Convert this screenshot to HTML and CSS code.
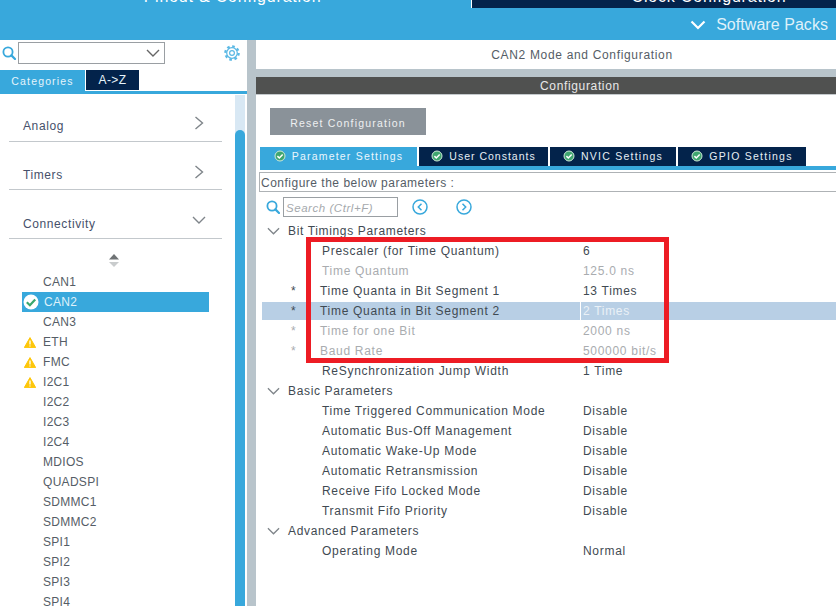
FILE: index.html
```html
<!DOCTYPE html>
<html lang="en">
<head>
<meta charset="utf-8">
<title>CAN2 Mode and Configuration</title>
<link rel="stylesheet" href="styles.css">
</head>
<body>
<svg class="defs" width="0" height="0" aria-hidden="true">
  <symbol id="i-search" viewBox="0 0 14 14"><circle cx="6" cy="6" r="4.6" fill="none" stroke="currentColor" stroke-width="1.8"/><path d="M9.4 9.4 13 13" stroke="currentColor" stroke-width="2.2" stroke-linecap="round"/></symbol>
  <symbol id="i-warn" viewBox="0 0 12 11"><path d="M6 .6 11.7 10.6H.3Z" fill="#fdc60a" stroke="#fdc60a" stroke-linejoin="round"/><path d="M6 3.6V7.4M6 8.4v1.1" stroke="#fff" stroke-width="1.3"/></symbol>
  <symbol id="i-tick" viewBox="0 0 12 12"><circle cx="6" cy="6" r="5" fill="#3fa66f" stroke="#cfe9da"/><path d="M3.4 6.1 5.3 8 8.7 4.4" fill="none" stroke="#fff" stroke-width="1.5"/></symbol>
  <symbol id="i-right" viewBox="0 0 10 14"><path d="M1.5 1 8.5 7 1.5 13" fill="none" stroke="#7f858a" stroke-width="1.4"/></symbol>
  <symbol id="i-down" viewBox="0 0 14 8"><path d="M1 1 7 7 13 1" fill="none" stroke="#7f858a" stroke-width="1.4"/></symbol>
</svg>
<div class="app">
  <header class="topbar">
    <div class="toptabs">
      <div class="toptab toptab-on">Pinout &amp; Configuration</div>
      <div class="toptab toptab-off">Clock Configuration</div>
    </div>
    <div class="packs">
      <svg class="packs-icon" viewBox="0 0 16 10"><path d="M1.5 1.5 8 8 14.500 1.500" fill="none" stroke="#fff" stroke-width="2.200"/></svg>
      <span>Software Packs</span>
    </div>
  </header>
  <div class="body">
    <aside class="side">
      <div class="side-search">
        <svg class="ico-search"><use href="#i-search"/></svg>
        <div class="combo">
          <svg class="combo-arrow" viewBox="0 0 14 8"><path d="M1 1 7 7 13 1" fill="none" stroke="#666" stroke-width="1.400"/></svg>
        </div>
        <svg class="gear" viewBox="0 0 16 16"><circle cx="8" cy="8" r="6.600" fill="none" stroke="#5ab8e4" stroke-width="2.400" stroke-dasharray="2.600 2.580"/><circle cx="8" cy="8" r="5.300" fill="#fff" stroke="#5ab8e4" stroke-width="1.200"/><circle cx="8" cy="8" r="2.400" fill="none" stroke="#5ab8e4" stroke-width="1.200"/></svg>
      </div>
      <div class="side-tabs">
        <div class="side-tab side-tab-on">Categories</div>
        <div class="side-tab side-tab-off">A-&gt;Z</div>
      </div>
      <div class="side-main">
        <div class="side-content">
          <div class="cat cat-first"><span>Analog</span><svg class="chev-r"><use href="#i-right"/></svg></div>
          <div class="cat"><span>Timers</span><svg class="chev-r"><use href="#i-right"/></svg></div>
          <div class="cat cat-last"><span>Connectivity</span><svg class="chev-d"><use href="#i-down"/></svg></div>
          <svg class="updown" viewBox="0 0 10 13"><path d="M5 0 10 5.500H0Z" fill="#6f7375"/><path d="M0 8H10L5 13Z" fill="#c9cccd"/></svg>
          <ul class="list">
            <li class="item">CAN1</li>
            <li class="item item-sel"><svg class="okmark" viewBox="0 0 16 16"><circle cx="8" cy="8" r="7.500" fill="#fff"/><path d="M3.800 8.200 6.900 11.200 12.200 5.400" fill="none" stroke="#3aa76d" stroke-width="2.200"/></svg>CAN2</li>
            <li class="item">CAN3</li>
            <li class="item"><svg class="warn"><use href="#i-warn"/></svg>ETH</li>
            <li class="item"><svg class="warn"><use href="#i-warn"/></svg>FMC</li>
            <li class="item"><svg class="warn"><use href="#i-warn"/></svg>I2C1</li>
            <li class="item">I2C2</li>
            <li class="item">I2C3</li>
            <li class="item">I2C4</li>
            <li class="item">MDIOS</li>
            <li class="item">QUADSPI</li>
            <li class="item">SDMMC1</li>
            <li class="item">SDMMC2</li>
            <li class="item">SPI1</li>
            <li class="item">SPI2</li>
            <li class="item">SPI3</li>
            <li class="item">SPI4</li>
          </ul>
        </div>
        <div class="scroll"><div class="thumb"></div></div>
      </div>
    </aside>
    <div class="divider"></div>
    <main class="main">
      <div class="mode-title">CAN2 Mode and Configuration</div>
      <div class="conf-title">Configuration</div>
      <div class="conf">
        <button class="reset" type="button">Reset Configuration</button>
        <div class="tabs">
          <div class="tab tab-on"><svg class="tick"><use href="#i-tick"/></svg>Parameter Settings</div>
          <div class="tab tab-user"><svg class="tick"><use href="#i-tick"/></svg>User Constants</div>
          <div class="tab tab-nvic"><svg class="tick"><use href="#i-tick"/></svg>NVIC Settings</div>
          <div class="tab tab-gpio"><svg class="tick"><use href="#i-tick"/></svg>GPIO Settings</div>
        </div>
        <div class="tabline"></div>
        <div class="hint">Configure the below parameters :</div>
        <div class="searchrow">
          <svg class="ico-search"><use href="#i-search"/></svg>
          <div class="searchbox">Search (Ctrl+F)</div>
          <svg class="nav nav-prev" viewBox="0 0 16 16"><circle cx="8" cy="8" r="7" fill="none" stroke="#38a8dc" stroke-width="1.500"/><path d="M9.500 4.800 6.300 8 9.500 11.200" fill="none" stroke="#38a8dc" stroke-width="1.500"/></svg>
          <svg class="nav" viewBox="0 0 16 16"><circle cx="8" cy="8" r="7" fill="none" stroke="#38a8dc" stroke-width="1.500"/><path d="M6.500 4.800 9.700 8 6.500 11.200" fill="none" stroke="#38a8dc" stroke-width="1.500"/></svg>
        </div>
        <div class="tree">
          <div class="group"><svg class="chev-g"><use href="#i-down"/></svg>Bit Timings Parameters</div>
          <div class="row"><span></span><span class="name">Prescaler (for Time Quantum)</span><span class="val">6</span></div>
          <div class="row row-dim"><span></span><span class="name">Time Quantum</span><span class="val">125.0 ns</span></div>
          <div class="row"><span class="star">*</span><span class="name name-star">Time Quanta in Bit Segment 1</span><span class="val">13 Times</span></div>
          <div class="row row-sel"><span class="star">*</span><span class="name name-star">Time Quanta in Bit Segment 2</span><span class="val">2 Times</span></div>
          <div class="row row-dim"><span class="star">*</span><span class="name name-star">Time for one Bit</span><span class="val">2000 ns</span></div>
          <div class="row row-dim"><span class="star">*</span><span class="name name-star">Baud Rate</span><span class="val">500000 bit/s</span></div>
          <div class="row"><span></span><span class="name">ReSynchronization Jump Width</span><span class="val">1 Time</span></div>
          <div class="group"><svg class="chev-g"><use href="#i-down"/></svg>Basic Parameters</div>
          <div class="row"><span></span><span class="name">Time Triggered Communication Mode</span><span class="val">Disable</span></div>
          <div class="row"><span></span><span class="name">Automatic Bus-Off Management</span><span class="val">Disable</span></div>
          <div class="row"><span></span><span class="name">Automatic Wake-Up Mode</span><span class="val">Disable</span></div>
          <div class="row"><span></span><span class="name">Automatic Retransmission</span><span class="val">Disable</span></div>
          <div class="row"><span></span><span class="name">Receive Fifo Locked Mode</span><span class="val">Disable</span></div>
          <div class="row"><span></span><span class="name">Transmit Fifo Priority</span><span class="val">Disable</span></div>
          <div class="group"><svg class="chev-g"><use href="#i-down"/></svg>Advanced Parameters</div>
          <div class="row"><span></span><span class="name">Operating Mode</span><span class="val">Normal</span></div>
        </div>
        <div class="highlight"></div>
      </div>
    </main>
  </div>
</div>
</body>
</html>
```

FILE: styles.css
```css
* { box-sizing: border-box; }
html, body { margin: 0; padding: 0; background: #fff; }
body { font-family: "Liberation Sans", Arial, sans-serif; font-size: 12px; color: #3f4a52; }
.defs { position: absolute; }
.app { width: 836px; height: 606px; overflow: hidden; display: flex; flex-direction: column; }

.topbar { height: 40px; flex: none; background: #38a8dc; }
.toptabs { display: flex; height: 8px; gap: 1px; background: #fff; }
.toptab { height: 8px; overflow: hidden; display: flex; align-items: flex-end; justify-content: center; color: #fff; font-size: 16px; line-height: 16px; letter-spacing: .8px; padding-bottom: 3px; }
.toptab-on { width: 471px; background: #38a8dc; padding-right: 6px; }
.toptab-off { flex: 1; background: #03234b; padding-left: 110px; }
.packs { display: flex; align-items: center; justify-content: flex-end; height: 31px; padding: 3px 8px 0 0; color: #dff1fa; font-size: 16px; letter-spacing: .05px; }
.packs-icon { width: 16px; height: 10px; margin-right: 10px; }

.body { flex: 1; min-height: 0; display: flex; }
.side { width: 247px; flex: none; display: flex; flex-direction: column; }
.divider { width: 9px; flex: none; background: #b8c4cb; }
.main { flex: 1; min-width: 0; display: flex; flex-direction: column; position: relative; }

.side-search { height: 30px; flex: none; display: flex; align-items: center; padding: 0 7px 4px 2px; }
.ico-search { width: 14px; height: 14px; color: #38a8dc; flex: none; }
.combo { width: 147px; height: 22px; margin-left: 2px; border: 1px solid #9a9fa3; display: flex; align-items: center; justify-content: flex-end; padding-right: 4px; }
.combo-arrow { width: 14px; height: 8px; }
.gear { width: 16px; height: 16px; margin-left: auto; }

.side-tabs { display: flex; height: 21px; flex: none; font-size: 10.500px; letter-spacing: 1.150px; font-weight: 400; }
.side-tab { display: flex; align-items: center; justify-content: center; color: #e6f4fb; }
.side-tab-on { width: 85px; background: #38a8dc; }
.side-tab-off { width: 53px; margin-left: 1px; background: #03234b; letter-spacing: .4px; font-size: 12px; height: 20px; }

.side-main { flex: 1; min-height: 0; display: flex; border-top: 3px solid #38a8dc; }
.side-content { flex: 1; min-width: 0; overflow: hidden; padding: 0 13px 0 9px; }
.scroll { width: 10px; margin: 1px 2px 0 0; background: #d8e8f4; padding-top: 35px; display: flex; flex: none; }
.thumb { flex: 1; background: #38a8dc; border-radius: 5px 5px 0 0; }

.cat { height: 48px; border-bottom: 1px solid #c3c8cc; display: flex; justify-content: space-between; padding: 25px 18px 0 14px; font-size: 12px; letter-spacing: .6px; color: #46506a; line-height: 16px; }
.cat-first { padding-top: 24px; }
.cat-last { height: 49px; padding-top: 26px; }
.chev-r { width: 10px; height: 14px; margin-top: -2px; }
.chev-d { width: 14px; height: 8px; margin: 0 -2px 0 0; }
.updown { display: block; width: 10px; height: 13px; margin: 15px 0 0 100px; }

.list { list-style: none; margin: 5px 0 0; padding: 0 0 0 13px; }
.item { height: 20px; width: 187px; padding-left: 21px; line-height: 21px; font-size: 12px; letter-spacing: .3px; color: #555d66; position: relative; }
.item-sel { background: #38a8dc; color: #dff1fa; padding-left: 22px; }
.okmark { position: absolute; left: 1px; top: 2px; width: 16px; height: 16px; }
.warn { position: absolute; left: 2px; top: 5px; width: 12px; height: 11px; }

.mode-title { height: 29px; flex: none; text-align: center; line-height: 30px; font-size: 12px; letter-spacing: .67px; color: #555d66; padding-left: 72px; }
.conf-title { flex: none; height: 26px; border-top: 8px solid #b8c4cb; color: #e8e8e8; font-size: 12px; letter-spacing: .65px; line-height: 19px; padding-left: 284px; background: linear-gradient(#505150 17px, #c4c9cc 17px, #c4c9cc 18px, #fff 18px); }
.conf { flex: 1; min-height: 0; position: relative; padding-top: 14px; overflow: hidden; margin-top: -1px; }

.reset { display: block; margin: 0 0 0 14px; width: 156px; height: 27px; background: #8a9299; border: 0; color: #eef0f1; font: 10.500px "Liberation Sans", Arial, sans-serif; letter-spacing: 1.200px; padding: 2px 0 0; }

.tabs { display: flex; margin: 12px 0 0 4px; height: 19px; gap: 2px; }
.tab { display: flex; align-items: center; justify-content: center; color: #e6eef4; background: #03234b; font-size: 10.500px; letter-spacing: 1.250px; padding-bottom: 1px; }
.tab-on { width: 157px; background: #38a8dc; color: #eaf6fc; letter-spacing: 1.200px; }
.tab-user { width: 129px; letter-spacing: 1px; }
.tab-nvic { width: 126px; }
.tab-gpio { width: 128px; }
.tick { width: 12px; height: 12px; margin-right: 6px; flex: none; }
.tabline { height: 4px; margin-left: 4px; background: #38a8dc; }

.hint { margin: 2px 0 0 3px; height: 20px; border: 1px solid #aeb2b5; border-right: 0; line-height: 20px; padding-left: 1px; font-size: 12px; letter-spacing: .5px; color: #555d66; }
.searchrow { display: flex; align-items: center; height: 25px; margin-top: 2px; padding-left: 10px; }
.searchbox { width: 115px; height: 20px; margin-left: 3px; border: 1px solid #9a9fa3; font-style: italic; font-size: 11.500px; letter-spacing: .55px; color: #a5a9ad; line-height: 20px; padding-left: 2px; }
.nav { width: 16px; height: 16px; margin-left: 28px; }
.nav-prev { margin-left: 14px; }

.tree { margin: 2px 0 0 6px; }
.group { height: 20px; line-height: 20px; display: flex; align-items: center; letter-spacing: .65px; color: #3f4a52; padding-left: 5px; }
.chev-g { width: 13px; height: 8px; margin-right: 8px; }
.row { height: 20px; display: grid; grid-template-columns: 58px 260px 1fr; letter-spacing: .7px; color: #3f4a52; border-top: 1px solid #fff; border-bottom: 1px solid #fff; }
.row > span { line-height: 18px; }
.star { padding-left: 29px; }
.name { padding-left: 2px; }
.name-star { padding-left: 0; }
.val { padding-left: 3px; }
.row-dim { color: #a9acaf; }
.row-sel { background: #b8cfe5; }
.row-sel .val { color: #eaf1f7; border-left: 1px solid #fff; padding-left: 2px; }

.highlight { position: absolute; left: 50px; top: 143px; width: 363px; height: 126px; border: 5px solid #ed1c24; pointer-events: none; }
```
